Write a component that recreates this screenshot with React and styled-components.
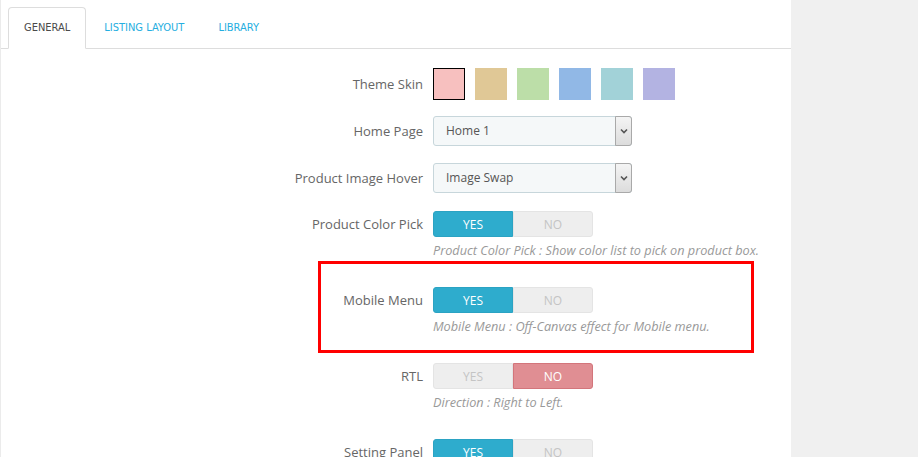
import React from 'react'
import styled, { createGlobalStyle } from 'styled-components';

const GlobalStyle = createGlobalStyle`
    html, body {
        margin: 0;
        padding: 0;
        height: 457px;
        overflow: hidden;
        background: #f0f0f0;
    }
`;

const Page = styled.div`
    display: flex;
    width: 918px;
    height: 457px;
    background: #f0f0f0;
    overflow: hidden;
`;

const Panel = styled.div`
    width: 791px;
    height: 100%;
    background: #ffffff;
    border-left: 1px solid #ebebeb;
    box-sizing: border-box;
    font-family: "Open Sans", sans-serif;
`;

const Tabs = styled.ul`
    display: flex;
    list-style: none;
    margin: 0;
    padding: 7px 0 0 7px;
    border-bottom: 1px solid #dddddd;
`;

const Tab = styled.li`
    margin-right: 2px;
    margin-bottom: -1px;
    padding: 0 15px;
    height: 40px;
    line-height: 40px;
    font-family: "Liberation Sans Narrow", "DejaVu Sans Condensed", sans-serif;
    font-size: 11px;
    text-transform: uppercase;
    color: ${p => (p.$active ? '#4a4a4a' : '#25aee0')};
    background: ${p => (p.$active ? '#ffffff' : 'transparent')};
    border: 1px solid ${p => (p.$active ? '#dddddd' : 'transparent')};
    border-bottom-color: ${p => (p.$active ? '#ffffff' : 'transparent')};
    border-radius: 4px 4px 0 0;
`;

const Form = styled.div`
    padding-top: 19px;
`;

const Group = styled.div`
    position: relative;
    display: grid;
    grid-template-columns: 422px 1fr;
    column-gap: 10px;
    align-items: center;
    margin-bottom: ${p => p.$mb || 17}px;
`;

const Highlight = styled.div`
    position: absolute;
    left: 317px;
    top: -26px;
    width: 436px;
    height: 92px;
    border: 3px solid #ff0000;
    box-sizing: border-box;
    pointer-events: none;
`;

const Label = styled.label`
    text-align: right;
    font-size: 13px;
    color: #666666;
`;

const Swatches = styled.div`
    display: flex;
    gap: 10px;
`;

const Swatch = styled.span`
    width: 32px;
    height: 32px;
    box-sizing: border-box;
    background: ${p => p.$color};
    border: ${p => (p.$selected ? '1px solid #000000' : 'none')};
`;

const Select = styled.div`
    position: relative;
    width: 199px;
    height: 30px;
    box-sizing: border-box;
    border: 1px solid #c7d6db;
    border-radius: 3px;
    background: #f5f8f9;
    font-size: 12px;
    color: #555555;
    line-height: 28px;
    padding-left: 12px;
`;

const Arrow = styled.span`
    position: absolute;
    right: -1px;
    top: -1px;
    width: 17px;
    height: 30px;
    box-sizing: border-box;
    border: 1px solid #a9a9a9;
    border-radius: 0 3px 3px 0;
    background: linear-gradient(#f4f4f4, #dcdcdc);
    display: flex;
    align-items: center;
    justify-content: center;
`;

const Toggle = styled.div`
    display: flex;
    width: 160px;
    height: 26px;
`;

const ToggleHalf = styled.span`
    flex: 1;
    display: flex;
    align-items: center;
    justify-content: center;
    font-size: 12px;
    box-sizing: border-box;
    color: ${p => (p.$on ? '#ffffff' : '#c4c4c4')};
    background: ${p => (p.$on ? (p.$kind === 'no' ? '#e08e93' : '#2eaccd') : '#eeeeee')};
    border: 1px solid ${p => (p.$on ? (p.$kind === 'no' ? '#d3757b' : '#2ba3c3') : '#e4e4e4')};
    border-radius: ${p => (p.$kind === 'no' ? '0 3px 3px 0' : '3px 0 0 3px')};
`;

const Help = styled.p`
    grid-column: 2;
    margin: 4px 0 11px;
    font-size: 12.7px;
    line-height: 18px;
    font-style: italic;
    color: #999999;
    white-space: nowrap;
`;

const Chevron = () => (
    <svg width="8" height="6" viewBox="0 0 8 6">
        <path d="M1 1.5 L4 4.5 L7 1.5" fill="none" stroke="#555" strokeWidth="1.6" />
    </svg>
);

const YesNo = ({ value }) => (
    <Toggle>
        <ToggleHalf $kind="yes" $on={value}>YES</ToggleHalf>
        <ToggleHalf $kind="no" $on={!value}>NO</ToggleHalf>
    </Toggle>
);

const skins = ['#f7c0bf', '#e0c896', '#bcdea8', '#91b8e6', '#a2d2d8', '#b3b3e2'];

const App = () => {
    return (
        <Page>
            <GlobalStyle />
            <Panel>
                <Tabs>
                    <Tab $active>General</Tab>
                    <Tab>Listing Layout</Tab>
                    <Tab>Library</Tab>
                </Tabs>
                <Form>
                    <Group $mb={16}>
                        <Label>Theme Skin</Label>
                        <Swatches>
                            {skins.map((c, i) => (
                                <Swatch key={c} $color={c} $selected={i === 0} />
                            ))}
                        </Swatches>
                    </Group>
                    <Group>
                        <Label>Home Page</Label>
                        <Select>Home 1<Arrow><Chevron /></Arrow></Select>
                    </Group>
                    <Group $mb={18}>
                        <Label>Product Image Hover</Label>
                        <Select>Image Swap<Arrow><Chevron /></Arrow></Select>
                    </Group>
                    <Group>
                        <Label>Product Color Pick</Label>
                        <YesNo value />
                        <Help>Product Color Pick : Show color list to pick on product box.</Help>
                    </Group>
                    <Group>
                        <Highlight />
                        <Label>Mobile Menu</Label>
                        <YesNo value />
                        <Help>Mobile Menu : Off-Canvas effect for Mobile menu.</Help>
                    </Group>
                    <Group>
                        <Label>RTL</Label>
                        <YesNo value={false} />
                        <Help>Direction : Right to Left.</Help>
                    </Group>
                    <Group>
                        <Label>Setting Panel</Label>
                        <YesNo value />
                    </Group>
                </Form>
            </Panel>
        </Page>
    )
}

export default App;
